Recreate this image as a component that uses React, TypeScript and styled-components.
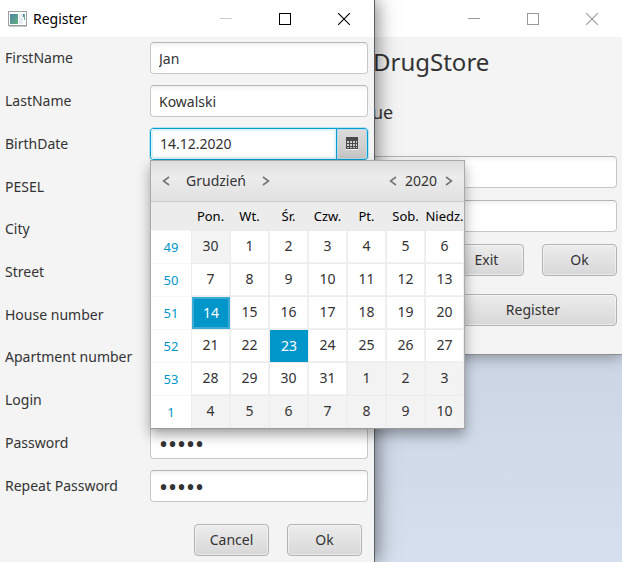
import React from "react";
import styled, { createGlobalStyle, css } from "styled-components";

const GlobalStyle = createGlobalStyle`
  * { box-sizing: border-box; }
  body {
    margin: 0;
    font-family: "Noto Sans", "Open Sans", sans-serif;
    font-size: 14px;
    line-height: 20px;
    color: #333;
  }
  button, input { font: inherit; color: inherit; }
`;

const Desktop = styled.main`
  position: relative;
  min-height: 100vh;
  overflow: hidden;
  background: linear-gradient(#cbd5e4 60%, #d5dfed);
`;

const windowBase = css`
  position: absolute;
  top: 0;
  display: flex;
  flex-direction: column;
  background: #f4f4f4;
`;

const FrontWindow = styled.section`
  ${windowBase}
  left: 0;
  width: 375px;
  max-width: 100%;
  min-height: 100vh;
  border-right: 1px solid #5c5e60;
  box-shadow: 2px 0 18px rgba(0, 0, 0, 0.5);
`;

const BackWindow = styled.section`
  ${windowBase}
  left: 320px;
  right: 0;
  border-bottom: 1px solid #8b8d90;
  box-shadow: 0 2px 14px rgba(0, 0, 0, 0.35);
`;

const TitleBar = styled.header`
  display: flex;
  align-items: center;
  height: 37px;
  padding: 0 1px 0 8px;
  background: #fff;
  color: #000;
`;

const Title = styled.h1`
  flex: 1;
  display: flex;
  align-items: center;
  gap: 6px;
  margin: 0;
  font-size: 14px;
  font-weight: 400;
`;

const CaptionButton = styled.button<{ $tone: string }>`
  display: grid;
  place-items: center;
  width: 59px;
  height: 100%;
  padding: 0;
  border: 0;
  background: none;
  color: ${(p) => p.$tone};
`;

const Form = styled.form`
  flex: 1;
  display: flex;
  flex-direction: column;
`;

const Fields = styled.div`
  flex: 1;
  display: grid;
  grid-template-columns: minmax(0, 1fr);
  grid-auto-rows: 1fr;
`;

const FieldRow = styled.div`
  display: grid;
  grid-template-columns: 145px minmax(0, 1fr);
  align-items: center;
  padding: 0 6px 0 5px;
`;

const TextInput = styled.input`
  width: 100%;
  min-width: 0;
  height: 32px;
  padding: 1px 8px 0;
  border: 1px solid #c8c8c8;
  border-top-color: #b5b5b5;
  border-radius: 4px;
  outline: 0;
  background: linear-gradient(#f2f2f2, #fff 5px);

  &[type="password"] {
    font-size: 24px;
  }
`;

const DatePicker = styled.div`
  position: relative;
  display: flex;
  height: 32px;
  border: 1px solid #039ed3;
  border-radius: 4px;
  background: #039ed3;
  box-shadow: 0 0 0 1px #b9e2f0;
`;

const DateInput = styled.input`
  flex: 1;
  min-width: 0;
  padding: 1px 9px 0;
  border: 0;
  border-radius: 3px 0 0 3px;
  outline: 0;
  background: #fff;
  box-shadow: inset 0 0 0 2px #dff3fa;
`;

const CalendarButton = styled.button`
  display: grid;
  place-items: center;
  width: 30px;
  margin-left: 1px;
  padding: 0;
  border: 0;
  border-radius: 0 3px 3px 0;
  background: linear-gradient(#dcdcdc, #c6c6c6);
  box-shadow: inset 0 0 0 1px #bcd8e2;
`;

const Actions = styled.div`
  display: flex;
  justify-content: flex-end;
  gap: 18px;
  padding: 17px 12px 6px;
`;

const PushButton = styled.button`
  min-width: 75px;
  height: 32px;
  padding: 0 8px;
  border: 1px solid #b3b3b3;
  border-radius: 4px;
  background: linear-gradient(#ececec, #d8d8d8);
  box-shadow: inset 0 0 0 1px rgba(255, 255, 255, 0.45);
`;

const Popup = styled.div`
  position: absolute;
  z-index: 2;
  top: 31px;
  left: -1px;
  width: 315px;
  border: 1px solid #aaa;
  border-bottom-color: #999;
  background: #fff;
  box-shadow: 0 6px 12px rgba(0, 0, 0, 0.35);
`;

const PopupHeader = styled.div`
  display: flex;
  justify-content: space-between;
  align-items: center;
  height: 41px;
  padding: 0 8px;
  border-bottom: 1px solid #c8c8c8;
  background: linear-gradient(#dedede, #ececec 40%, #e0e0e0);
`;

const Spinner = styled.div<{ $gap: number }>`
  display: flex;
  align-items: center;
  gap: ${(p) => p.$gap}px;
`;

const ArrowButton = styled.button`
  display: grid;
  place-items: center;
  width: 14px;
  height: 20px;
  padding: 0;
  border: 0;
  background: none;
  color: #777;
`;

const MonthTable = styled.table`
  width: 100%;
  table-layout: fixed;
  border-spacing: 0;
  text-align: center;
`;

const WeekColumn = styled.col`
  width: 40px;
`;

const DayName = styled.th`
  height: 28px;
  padding: 0;
  background: #ececec;
  color: #000;
  font-size: 13px;
  font-weight: 400;
  white-space: nowrap;
`;

const WeekNumber = styled.th`
  height: 33px;
  padding: 0;
  border-top: 1px solid #f6f6f6;
  color: #0096c9;
  font-size: 13px;
  font-weight: 400;
`;

const DayCell = styled.td`
  height: 33px;
  padding: 0;
  border: 0 solid #ececec;
  border-width: 1px 0 0 1px;
`;

type DayKind = "normal" | "outside" | "today" | "selected";

const dayStyles = {
  normal: css`background: #fff;`,
  outside: css`background: #f3f3f3;`,
  today: css`background: #0096c9; color: #fff;`,
  selected: css`
    background: #0096c9;
    color: #fff;
    box-shadow: inset 0 0 0 2px #39abd4;
  `,
};

const DayButton = styled.button<{ $kind: DayKind }>`
  display: block;
  width: 100%;
  height: 32px;
  padding: 0;
  border: 0 solid #f1f1f1;
  border-width: ${(p) => (p.$kind === "normal" || p.$kind === "outside" ? "0 1px 1px 0" : "0")};
  ${(p) => dayStyles[p.$kind]}
`;

const LoginForm = styled.form`
  display: flex;
  flex-direction: column;
  gap: 12px;
  padding: 8px 5px 28px 10px;
`;

const Brand = styled.h2`
  margin: 0;
  padding-left: 43px;
  font-size: 24px;
  line-height: 34px;
  font-weight: 400;
`;

const Prompt = styled.p`
  margin: 8px 0 19px;
  padding-left: 42px;
  font-size: 18px;
  line-height: 26px;
`;

const LoginActions = styled.div`
  display: grid;
  grid-template-columns: 75px 75px;
  justify-content: end;
  gap: 18px;
`;

const WideButton = styled(PushButton)`
  grid-column: 1 / -1;
`;

function CaptionButtons({ minimize, tone }: { minimize: string; tone: string }) {
  return (
    <>
      <CaptionButton type="button" aria-label="Minimize" $tone={minimize}>
        <svg width="12" height="12" shapeRendering="crispEdges"><path d="M0 5.5h12" stroke="currentColor" /></svg>
      </CaptionButton>
      <CaptionButton type="button" aria-label="Maximize" $tone={tone}>
        <svg width="12" height="12" shapeRendering="crispEdges"><rect x="0.5" y="0.5" width="11" height="11" fill="none" stroke="currentColor" /></svg>
      </CaptionButton>
      <CaptionButton type="button" aria-label="Close" $tone={tone}>
        <svg width="12" height="12"><path d="M0 0L12 12M12 0L0 12" stroke="currentColor" strokeWidth="1.1" /></svg>
      </CaptionButton>
    </>
  );
}

function AppIcon() {
  return (
    <svg width="19" height="16" aria-hidden="true">
      <defs>
        <linearGradient id="pane" x1="0" y1="0" x2="1" y2="1">
          <stop offset="0" stopColor="#4b83a8" />
          <stop offset="1" stopColor="#64b07c" />
        </linearGradient>
      </defs>
      <rect x="0.5" y="0.5" width="18" height="14" fill="#fff" stroke="#9a9fa3" />
      <path d="M1 15.5h18" stroke="#c4c7c9" />
      <rect x="2" y="3" width="8" height="10" fill="url(#pane)" />
      <rect x="11" y="3" width="4" height="10" fill="#e7eef1" />
      <path d="M15.5 3v3" stroke="#4b83a8" />
      <path d="M16.5 3v6" stroke="#6bb08a" />
    </svg>
  );
}

function Arrow({ label, next }: { label: string; next?: boolean }) {
  return (
    <ArrowButton type="button" aria-label={label}>
      <svg width="8" height="10">
        <path d={next ? "M1 1L6.5 5L1 9" : "M7 1L1.5 5L7 9"} fill="none" stroke="currentColor" strokeWidth="1.6" />
      </svg>
    </ArrowButton>
  );
}

const weekdays = ["Pon.", "Wt.", "Śr.", "Czw.", "Pt.", "Sob.", "Niedz."];
const weeks = [
  { number: 49, days: [30, 1, 2, 3, 4, 5, 6] },
  { number: 50, days: [7, 8, 9, 10, 11, 12, 13] },
  { number: 51, days: [14, 15, 16, 17, 18, 19, 20] },
  { number: 52, days: [21, 22, 23, 24, 25, 26, 27] },
  { number: 53, days: [28, 29, 30, 31, 1, 2, 3] },
  { number: 1, days: [4, 5, 6, 7, 8, 9, 10] },
];

function dayKind(row: number, day: number): DayKind {
  if ((row === 0 && day > 20) || (row > 3 && day < 20)) return "outside";
  if (day === 14) return "selected";
  return day === 23 ? "today" : "normal";
}

function Calendar() {
  return (
    <Popup>
      <PopupHeader>
        <Spinner $gap={13}>
          <Arrow label="Previous month" />
          <span>Grudzień</span>
          <Arrow label="Next month" next />
        </Spinner>
        <Spinner $gap={5}>
          <Arrow label="Previous year" />
          <span>2020</span>
          <Arrow label="Next year" next />
        </Spinner>
      </PopupHeader>
      <MonthTable>
        <colgroup>
          <WeekColumn />
          <col span={7} />
        </colgroup>
        <thead>
          <tr>
            <DayName />
            {weekdays.map((name) => <DayName key={name} scope="col">{name}</DayName>)}
          </tr>
        </thead>
        <tbody>
          {weeks.map((week, row) => (
            <tr key={week.number}>
              <WeekNumber scope="row">{week.number}</WeekNumber>
              {week.days.map((day) => (
                <DayCell key={day}>
                  <DayButton type="button" $kind={dayKind(row, day)}>{day}</DayButton>
                </DayCell>
              ))}
            </tr>
          ))}
        </tbody>
      </MonthTable>
    </Popup>
  );
}

function CalendarIcon() {
  return (
    <svg width="12" height="13" shapeRendering="crispEdges" aria-hidden="true">
      <rect width="12" height="12" fill="#4a4a4a" />
      <path d="M1 5h10M1 8h10" stroke="#ccc" strokeWidth="2" strokeDasharray="2 1" />
      <path d="M1 10.5h10" stroke="#bbb" strokeDasharray="2 1" />
      <path d="M0 12.5h12" stroke="#f4f4f4" />
    </svg>
  );
}

const fields = [
  { id: "firstName", label: "FirstName", value: "Jan" },
  { id: "lastName", label: "LastName", value: "Kowalski" },
  { id: "birthDate", label: "BirthDate", value: "14.12.2020", kind: "date" },
  { id: "pesel", label: "PESEL" },
  { id: "city", label: "City" },
  { id: "street", label: "Street" },
  { id: "houseNumber", label: "House number" },
  { id: "apartmentNumber", label: "Apartment number" },
  { id: "login", label: "Login" },
  { id: "password", label: "Password", value: "abcde", kind: "password" },
  { id: "repeatPassword", label: "Repeat Password", value: "abcde", kind: "password" },
];

export default function App() {
  return (
    <>
      <GlobalStyle />
      <Desktop>
        <BackWindow>
          <TitleBar>
            <Title />
            <CaptionButtons minimize="#999" tone="#999" />
          </TitleBar>
          <LoginForm>
            <Brand>DrugStore</Brand>
            <Prompt>ue</Prompt>
            <TextInput aria-label="Login" />
            <TextInput aria-label="Password" type="password" />
            <LoginActions>
              <PushButton type="button">Exit</PushButton>
              <PushButton type="button">Ok</PushButton>
              <WideButton type="button">Register</WideButton>
            </LoginActions>
          </LoginForm>
        </BackWindow>
        <FrontWindow>
          <TitleBar>
            <Title><AppIcon />Register</Title>
            <CaptionButtons minimize="#ccc" tone="#000" />
          </TitleBar>
          <Form>
            <Fields>
              {fields.map((f) => (
                <FieldRow key={f.id}>
                  <label htmlFor={f.id}>{f.label}</label>
                  {f.kind === "date" ? (
                    <DatePicker>
                      <DateInput id={f.id} defaultValue={f.value} />
                      <CalendarButton type="button" aria-label="Open calendar"><CalendarIcon /></CalendarButton>
                      <Calendar />
                    </DatePicker>
                  ) : (
                    <TextInput id={f.id} type={f.kind ?? "text"} defaultValue={f.value} />
                  )}
                </FieldRow>
              ))}
            </Fields>
            <Actions>
              <PushButton type="button">Cancel</PushButton>
              <PushButton type="button">Ok</PushButton>
            </Actions>
          </Form>
        </FrontWindow>
      </Desktop>
    </>
  );
}
